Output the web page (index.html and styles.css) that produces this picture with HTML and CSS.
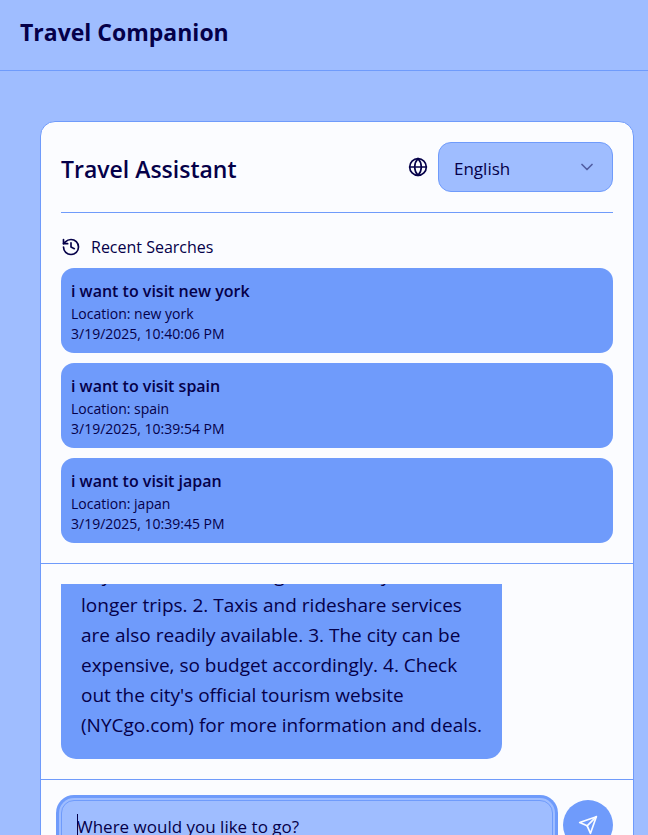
FILE: index.html
```html
<!DOCTYPE html>
<html lang="en">
<head>
<meta charset="utf-8">
<meta name="viewport" content="width=device-width, initial-scale=1">
<title>Travel Companion</title>
<link rel="stylesheet" href="styles.css">
</head>
<body>
<header class="topbar">
  <h1 class="brand">Travel Companion</h1>
</header>
<main class="page">
  <section class="card">
    <div class="card-top">
      <div class="card-header">
        <h2 class="card-title">Travel Assistant</h2>
        <div class="language">
          <svg class="icon" viewBox="0 0 24 24" aria-hidden="true"><circle cx="12" cy="12" r="10"/><path d="M12 2a14.5 14.5 0 0 0 0 20 14.5 14.5 0 0 0 0-20"/><path d="M2 12h20"/></svg>
          <div class="select-wrap">
            <select class="select" aria-label="Language">
              <option>English</option>
              <option>Español</option>
              <option>Français</option>
            </select>
            <svg class="icon chevron" viewBox="0 0 24 24" aria-hidden="true"><path d="m6 9 6 6 6-6"/></svg>
          </div>
        </div>
      </div>
      <div class="recent-heading">
        <svg class="icon" viewBox="0 0 24 24" aria-hidden="true"><path d="M3 12a9 9 0 1 0 9-9 9.75 9.75 0 0 0-6.74 2.74L3 8"/><path d="M3 3v5h5"/><path d="M12 7v5l4 2"/></svg>
        <h3 class="recent-title">Recent Searches</h3>
      </div>
      <ul class="searches">
        <li class="search">
          <p class="query">i want to visit new york</p>
          <p class="meta">Location: new york</p>
          <p class="meta">3/19/2025, 10:40:06 PM</p>
        </li>
        <li class="search">
          <p class="query">i want to visit spain</p>
          <p class="meta">Location: spain</p>
          <p class="meta">3/19/2025, 10:39:54 PM</p>
        </li>
        <li class="search">
          <p class="query">i want to visit japan</p>
          <p class="meta">Location: japan</p>
          <p class="meta">3/19/2025, 10:39:45 PM</p>
        </li>
      </ul>
    </div>
    <div class="chat">
      <div class="messages">
        <p class="message">city, but consider using the subway for<br>longer trips. 2. Taxis and rideshare services<br>are also readily available. 3. The city can be<br>expensive, so budget accordingly. 4. Check<br>out the city's official tourism website<br>(NYCgo.com) for more information and deals.</p>
      </div>
    </div>
    <form class="composer">
      <div class="field">
        <input class="input" type="text" aria-label="Destination" placeholder="Where would you like to go?">
      </div>
      <button class="send" type="button" aria-label="Send">
        <svg class="icon" viewBox="0 0 24 24" aria-hidden="true"><path d="m22 2-7 20-4-9-9-4Z"/><path d="M22 2 11 13"/></svg>
      </button>
    </form>
  </section>
</main>
</body>
</html>
```
FILE: styles.css
```css
:root {
  --sky: #9fbdff;
  --blue: #6f9bfb;
  --paper: #fbfcff;
  --ink: #050049;
}

* {
  box-sizing: border-box;
  margin: 0;
}

body {
  height: 100vh;
  overflow: hidden;
  background: var(--sky);
  color: var(--ink);
  font-family: "Open Sans", "Noto Sans", sans-serif;
}

.topbar {
  padding: 15px 20px 20px;
  border-bottom: 1px solid var(--blue);
}

.brand {
  font-size: 23px;
  line-height: 35px;
  font-weight: 700;
}

.page {
  padding: 50px 14px 40px 40px;
}

.card {
  background: var(--paper);
  border: 1px solid var(--blue);
  border-radius: 15px;
}

.card-top {
  padding: 20px;
  border-bottom: 1px solid var(--blue);
}

.card-header {
  display: flex;
  align-items: center;
  justify-content: space-between;
  padding-bottom: 20px;
  border-bottom: 1px solid var(--blue);
}

.card-title {
  padding-top: 4px;
  font-size: 23px;
  line-height: 35px;
  font-weight: 600;
}

.language {
  display: flex;
  align-items: center;
  gap: 10px;
}

.icon {
  display: block;
  flex: none;
  width: 20px;
  height: 20px;
  fill: none;
  stroke: currentColor;
  stroke-width: 2;
  stroke-linecap: round;
  stroke-linejoin: round;
}

.select-wrap {
  position: relative;
}

.select {
  appearance: none;
  display: block;
  width: 175px;
  height: 50px;
  padding: 2px 15px 0;
  border: 1px solid var(--blue);
  border-radius: 13px;
  background: var(--sky);
  color: inherit;
  font: 17px/25px "Open Sans", "Noto Sans", sans-serif;
}

.chevron {
  position: absolute;
  top: 15px;
  right: 16px;
  opacity: 0.5;
  pointer-events: none;
}

.recent-heading {
  display: flex;
  align-items: center;
  gap: 10px;
  padding: 20px 0 8px;
}

.recent-title {
  padding-top: 2px;
  font-size: 16px;
  line-height: 25px;
  font-weight: 400;
}

.searches {
  display: grid;
  gap: 10px;
  padding: 0;
  list-style: none;
}

.search {
  padding: 11px 10px 9px;
  border-radius: 13px;
  background: var(--blue);
}

.query {
  font-size: 16px;
  line-height: 25px;
  font-weight: 600;
}

.meta {
  font-size: 14px;
  line-height: 20px;
}

.chat {
  padding: 20px;
  border-bottom: 1px solid var(--blue);
}

.messages {
  display: flex;
  flex-direction: column;
  justify-content: flex-end;
  height: 175px;
  overflow: hidden;
}

.message {
  flex: none;
  align-self: flex-start;
  max-width: 80%;
  padding: 21px 20px 19px;
  border-radius: 15px;
  background: var(--blue);
  font-size: 19px;
  line-height: 30px;
}

.composer {
  display: flex;
  gap: 10px;
  padding: 20px;
}

.field {
  position: relative;
  flex: 1;
}

/* Text cursor of the focused field */
.field::before {
  content: "";
  position: absolute;
  top: 14px;
  left: 16px;
  width: 1px;
  height: 24px;
  background: var(--ink);
}

.input {
  display: block;
  width: 100%;
  height: 50px;
  padding: 2px 15px 0;
  border: 1px solid var(--blue);
  border-radius: 13px;
  outline: 0;
  box-shadow: 0 0 0 2px var(--sky), 0 0 0 5px var(--blue);
  background: var(--sky);
  color: inherit;
  font: 17px/25px "Open Sans", "Noto Sans", sans-serif;
}

.input::placeholder {
  color: var(--ink);
  opacity: 1;
}

.send {
  display: grid;
  place-items: center;
  width: 50px;
  height: 50px;
  padding: 0;
  border: 0;
  border-radius: 50%;
  background: var(--blue);
  color: var(--paper);
}
```
